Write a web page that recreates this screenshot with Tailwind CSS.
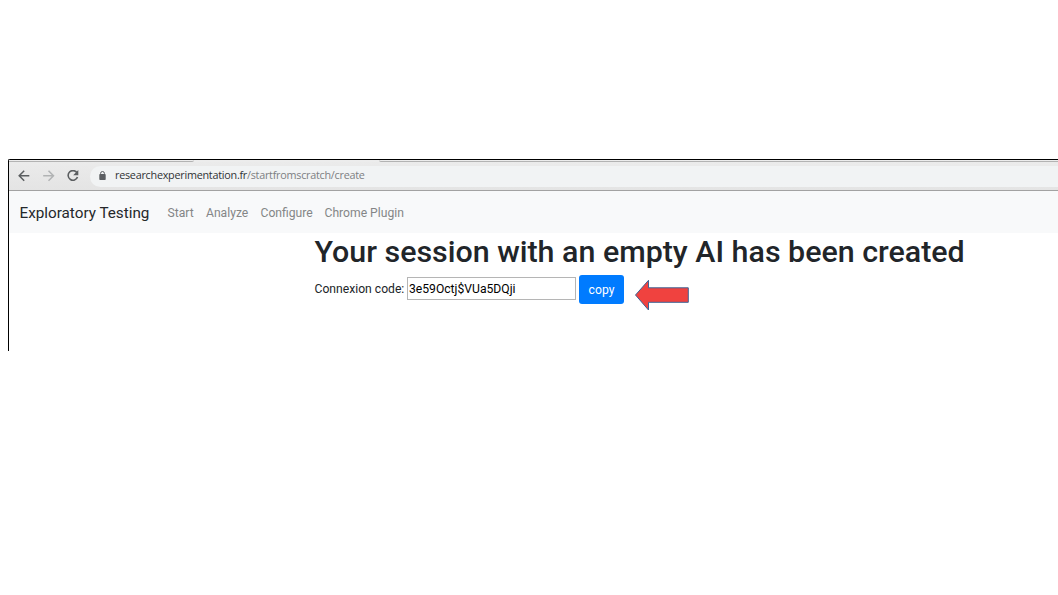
<!DOCTYPE html>
<html lang="en">
<head>
<meta charset="utf-8">
<title>Exploratory Testing</title>
<script src="https://cdn.jsdelivr.net/npm/@tailwindcss/browser@4"></script>
</head>
<body class="bg-white pt-[159px] pl-2 overflow-hidden font-['Roboto',sans-serif] text-[#212529]">
<div class="h-48 border-l border-t border-black rounded-tl-[2px] whitespace-nowrap">
  <header class="h-[31px] bg-[#e6e6e7] border-b border-[#a2a2a2] flex flex-col">
    <div class="h-[2px] flex bg-[#ececec]">
      <div class="w-[185px] h-[2px] border-b border-[#b3b3b3] rounded-br-[2px]"></div>
      <div class="w-[185px]"></div>
      <div class="flex-1 h-[2px] border-b border-[#b3b3b3] rounded-bl-[2px]"></div>
    </div>
    <div class="flex-1 flex items-center bg-linear-to-b from-[#ebebeb] to-[#e4e4e4]">
      <svg class="w-3 h-3 ml-[9px]" viewBox="0 0 12 12" fill="none" stroke="#5b5e60" stroke-width="1.5"><path d="M11.3 5.7H1.3M6.2.7 1.2 5.7l5 5"/></svg>
      <svg class="w-3 h-3 ml-[13px]" viewBox="0 0 12 12" fill="none" stroke="#b1b3b4" stroke-width="1.5"><path d="M.2 5.7h10.3M5.5.7l5 5-5 5"/></svg>
      <svg class="w-3 h-3 ml-3" viewBox="0 0 12 12" fill="none" stroke="#5b5e60" stroke-width="1.6"><path d="M10 2.8A4.8 4.8 0 1 0 10.5 7"/><path d="M11.3.1v5.1H6.2z" fill="#5b5e60" stroke="none"/></svg>
      <div class="flex-1 h-[21px] ml-[11px] rounded-l-full bg-[#f1f3f4] flex items-center">
        <svg class="w-[7px] h-[9px] ml-[9px] mb-px" viewBox="0 0 7 9"><rect x=".3" y="3" width="6.4" height="6" rx=".8" fill="#5b5e62"/><path d="M1.6 3.5V2.4a1.9 1.9 0 0 1 3.8 0v1.1" fill="none" stroke="#5b5e62"/></svg>
        <div class="ml-[9px] mb-0.5 flex font-['Open_Sans',sans-serif] text-[10.8px] leading-4 text-[#303235]"><span class="w-[132px] tracking-[-0.25px]">researchexperimentation.fr</span><span class="text-[#7d8083] tracking-[-0.25px]">/startfromscratch/create</span></div>
      </div>
    </div>
  </header>
  <nav class="h-[42px] bg-[#f8f9fa] flex items-center pt-[2px] pl-[10.5px] text-[12.15px] text-[#848687]">
    <span class="w-[148px] text-[15.25px] text-[#25282b]">Exploratory Testing</span>
    <span class="w-[38.5px]">Start</span>
    <span class="w-[54.5px]">Analyze</span>
    <span class="w-[64px]">Configure</span>
    <span>Chrome Plugin</span>
  </nav>
  <main class="pl-[305.5px]">
    <h1 class="h-[42px] leading-[38px] text-[30.4px] font-medium">Your session with an empty AI has been created</h1>
    <div class="flex items-start text-[12.15px]">
      <label class="w-[92.5px] pt-[5.5px] leading-4" for="code">Connexion code:</label>
      <input id="code" class="mt-[2px] w-[169px] h-[23px] border border-[#b5b5b5] px-px text-black" value="3e59Octj$VUa5DQji">
      <button class="ml-[3px] w-[45px] h-[29px] pt-px rounded-[3px] bg-[#007bff] text-white">copy</button>
      <svg class="ml-[10px] mt-1 w-[56px] h-8" viewBox="0 0 56 32"><path d="M1.5 16 14.5 1.3v7.5h39.8v14.5H14.5v7.7z" fill="#f0423f" stroke="#3e6496"/></svg>
    </div>
  </main>
</div>
</body>
</html>
